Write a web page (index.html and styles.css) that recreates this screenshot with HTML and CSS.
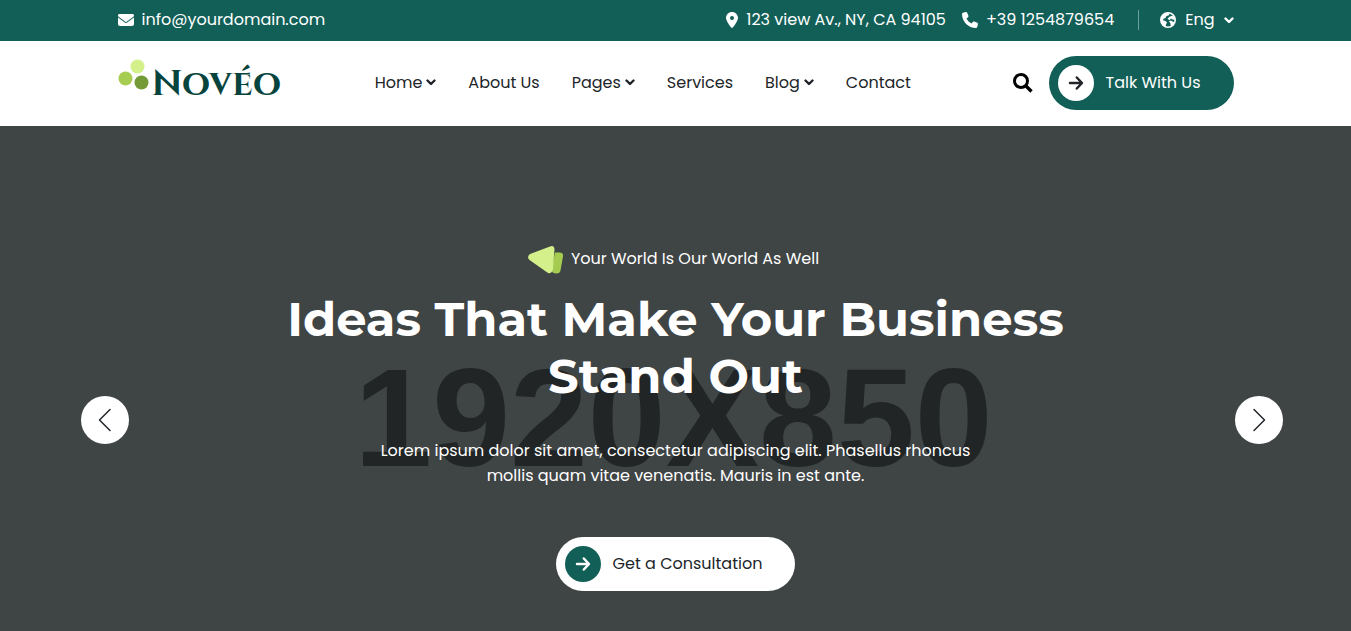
FILE: index.html
```html
<!DOCTYPE html>
<html lang="en">
<head>
<meta charset="utf-8">
<meta name="viewport" content="width=device-width, initial-scale=1">
<title>Novéo</title>
<link rel="stylesheet" href="styles.css">
</head>
<body>
<svg class="sprite" aria-hidden="true">
  <symbol id="chevron" viewBox="0 0 10 8"><path d="M1.500 2.500L5 6l3.500-3.500" fill="none" stroke="currentColor" stroke-width="2.400" stroke-linecap="round" stroke-linejoin="round"/></symbol>
  <symbol id="arrow" viewBox="0 0 16 16"><path d="M2 8h11.500M8.800 2.500L14 8l-5.200 5.500" fill="none" stroke="currentColor" stroke-width="2.500" stroke-linecap="round" stroke-linejoin="round"/></symbol>
</svg>
<div class="topbar">
  <div class="container topbar-row">
    <a class="contact" href="#">
      <svg class="icon" viewBox="0 0 512 512"><path fill="currentColor" d="M48 64C21.500 64 0 85.500 0 112c0 15.100 7.100 29.300 19.200 38.400L236.800 313.600c11.400 8.500 27 8.500 38.400 0L492.800 150.400c12.100-9.100 19.200-23.300 19.200-38.400c0-26.500-21.500-48-48-48H48zM0 176V384c0 35.300 28.700 64 64 64H448c35.300 0 64-28.700 64-64V176L294.400 339.200c-22.800 17.100-54 17.100-76.800 0L0 176z"/></svg>
      <span>info@yourdomain.com</span>
    </a>
    <div class="topbar-info">
      <span class="contact">
        <svg class="pin" viewBox="0 0 384 512"><path fill="currentColor" d="M215.700 499.200C267 435 384 279.400 384 192C384 86 298 0 192 0S0 86 0 192c0 87.400 117 243 168.300 307.200c12.300 15.300 35.100 15.300 47.400 0zM192 128a64 64 0 1 1 0 128 64 64 0 1 1 0-128z"/></svg>
        <span>123 view Av., NY, CA 94105</span>
      </span>
      <a class="contact" href="#">
        <svg class="icon" viewBox="0 0 512 512"><path fill="currentColor" d="M164.900 24.600c-7.700-18.600-28-28.500-47.400-23.200l-88 24C12.100 30.200 0 46 0 64C0 311.400 200.600 512 448 512c18 0 33.800-12.100 38.600-29.500l24-88c5.300-19.400-4.600-39.700-23.200-47.400l-96-40c-16.300-6.800-35.200-2.100-46.300 11.600L304.700 368C234.300 334.700 177.300 277.700 144 207.300L193.300 167c13.700-11.200 18.400-30 11.600-46.300l-40-96z"/></svg>
        <span>+39 1254879654</span>
      </a>
      <button class="language" type="button">
        <svg class="icon" viewBox="0 0 16 16"><circle cx="8" cy="8" r="7.200" fill="none" stroke="currentColor" stroke-width="1.600"/><path fill="currentColor" d="M1 5.500L3.500 2 8 .800 9.500 2 8.500 3.500 6.500 4 5.500 6 3.500 6.800 3 8.200 5.500 9l1.500 1.500L6 12.500 5.500 15 2.500 13 1 9.500zM7.500 6.800L9.500 4.800 12 3.800l2.200 1L15 7.500l-2 .300-2-1.200-1.500 1.600zM9 9.300l2-.800 2 1.300 1.800.200L12.500 14 10.500 13.500 10.500 11.500z"/></svg>
        <span>Eng</span>
        <svg class="chevron" viewBox="0 0 10 8"><use href="#chevron"/></svg>
      </button>
    </div>
  </div>
</div>
<header class="header">
  <div class="container header-row">
    <a class="logo" href="#">
      <svg class="logo-mark" viewBox="0 0 32 32"><circle cx="19.500" cy="7.500" r="7" fill="#d3f08b"/><circle cx="7.500" cy="19.500" r="7" fill="#a7cc52"/><circle cx="23.500" cy="23.500" r="7" fill="#739a37"/></svg>
      <span class="logo-name">Novéo</span>
    </a>
    <nav class="nav">
      <a href="#">Home <svg class="chevron" viewBox="0 0 10 8"><use href="#chevron"/></svg></a>
      <a href="#">About Us</a>
      <a href="#">Pages <svg class="chevron" viewBox="0 0 10 8"><use href="#chevron"/></svg></a>
      <a href="#">Services</a>
      <a href="#">Blog <svg class="chevron" viewBox="0 0 10 8"><use href="#chevron"/></svg></a>
      <a href="#">Contact</a>
    </nav>
    <div class="actions">
      <button class="search" type="button" aria-label="Search"><svg viewBox="0 0 20 20"><circle cx="8" cy="8" r="6.500" fill="none" stroke="currentColor" stroke-width="3"/><path d="M13 13l5.500 5.500" stroke="currentColor" stroke-width="3.400"/></svg></button>
      <a class="pill pill-green" href="#"><span class="pill-dot"><svg viewBox="0 0 16 16"><use href="#arrow"/></svg></span>Talk With Us</a>
    </div>
  </div>
</header>
<main class="hero">
  <div class="watermark" aria-hidden="true">1920X850</div>
  <div class="hero-content">
    <p class="tagline">
      <svg class="tagline-mark" viewBox="0 0 36 28"><path d="M27 6.500h4.500q4 0 3.500 4l-2.500 14q-.500 3-4 3-5 0-5-4z" fill="#a5cb50"/><path d="M2 8L22 .500q4-1.500 4.500 2.500l-1.500 20q-1 5-5 4L1.500 14q-3-3 .500-6z" fill="#d3f08b"/></svg>
      <span>Your World Is Our World As Well</span>
    </p>
    <h1>Ideas That Make Your Business<br>Stand Out</h1>
    <p class="lead">Lorem ipsum dolor sit amet, consectetur adipiscing elit. Phasellus rhoncus<br>mollis quam vitae venenatis. Mauris in est ante.</p>
    <a class="pill pill-white" href="#"><span class="pill-dot"><svg viewBox="0 0 16 16"><use href="#arrow"/></svg></span>Get a Consultation</a>
  </div>
  <button class="slide slide-prev" type="button" aria-label="Previous slide"><svg viewBox="0 0 24 24"><path d="M17 1.500L6.500 12 17 22.500"/></svg></button>
  <button class="slide slide-next" type="button" aria-label="Next slide"><svg viewBox="0 0 24 24"><path d="M7 1.500L17.500 12 7 22.500"/></svg></button>
</main>
</body>
</html>
```
FILE: styles.css
```css
* { box-sizing: border-box; }
body {
  margin: 0;
  min-height: 100vh;
  display: flex;
  flex-direction: column;
  font: 16px/25px Poppins, Inter, "Open Sans", sans-serif;
  color: #212529;
}
a { color: inherit; text-decoration: none; }
button { font: inherit; color: inherit; background: none; border: 0; padding: 0; cursor: pointer; }
h1, p { margin: 0; }
svg { display: block; flex: none; }
.sprite { position: absolute; width: 0; height: 0; }
.container { width: 100%; max-width: 1140px; margin: 0 auto; padding: 0 12px; }
.chevron { width: 10px; height: 8px; }

.topbar { background: #125f58; color: #fff; }
.topbar-row { display: flex; align-items: center; justify-content: space-between; padding-top: 7px; padding-bottom: 9px; }
.topbar-info, .contact, .language { display: flex; align-items: center; }
.topbar-info { gap: 16px; }
.contact { gap: 8px; }
.icon { width: 16px; height: 16px; }
.pin { width: 12px; height: 16px; }
.language { gap: 9px; margin-left: 8px; padding-left: 22px; background: linear-gradient(#6b9f9a, #6b9f9a) left center / 1px 20px no-repeat; }

.header { background: #fff; }
.header-row { display: flex; align-items: center; justify-content: space-between; padding-top: 15px; padding-bottom: 16px; }
.logo { display: flex; align-items: center; gap: 2px; color: #07443e; }
.logo-mark { width: 32px; height: 32px; margin-bottom: 16px; }
.logo-name { padding-top: 2px; font: bold 36px/48px Cinzel, "Liberation Serif", serif; }
.nav { display: flex; gap: 32px; line-height: 23px; padding: 0 8px 2px 0; }
.nav a { display: flex; align-items: center; gap: 4px; }
.actions { display: flex; align-items: center; gap: 16px; }
.search { color: #000; }
.search svg { width: 20px; height: 20px; }
.pill { display: inline-flex; align-items: center; gap: 12px; height: 54px; padding: 0 33px 0 9px; border-radius: 27px; line-height: 24px; white-space: nowrap; }
.pill-dot { display: grid; place-items: center; width: 36px; height: 36px; border-radius: 50%; }
.pill-dot svg { width: 16px; height: 16px; }
.pill-green { background: #125f58; color: #fff; }
.pill-green .pill-dot { background: #fff; color: #212529; }
.pill-white { background: #fff; color: #212529; }
.pill-white .pill-dot { background: #125f58; color: #fff; }

.hero { position: relative; flex: 1; padding: 120px 16px 40px; overflow: hidden; background: #3f4445; color: #fff; }
.watermark { position: absolute; top: 212px; left: 0; right: 4px; text-align: center; font: bold 140px/160px "Liberation Sans", Arial, sans-serif; color: #212525; }
.hero-content { position: relative; display: flex; flex-direction: column; align-items: center; text-align: center; }
.tagline { display: flex; align-items: flex-start; gap: 7px; height: 28px; margin-bottom: 17px; padding-right: 4px; }
.tagline-mark { width: 36px; height: 28px; }
h1 { margin-bottom: 33px; font: 700 48px/57px Montserrat, Inter, "Open Sans", sans-serif; }
.lead { margin-bottom: 49px; }
.slide { position: absolute; top: 270px; display: grid; place-items: center; width: 48px; height: 48px; border-radius: 50%; background: #fff; }
.slide svg { width: 24px; height: 24px; fill: none; stroke: #212529; stroke-width: 1.5; stroke-linecap: round; stroke-linejoin: round; }
.slide-prev { left: 6%; }
.slide-next { right: 5%; }
```
